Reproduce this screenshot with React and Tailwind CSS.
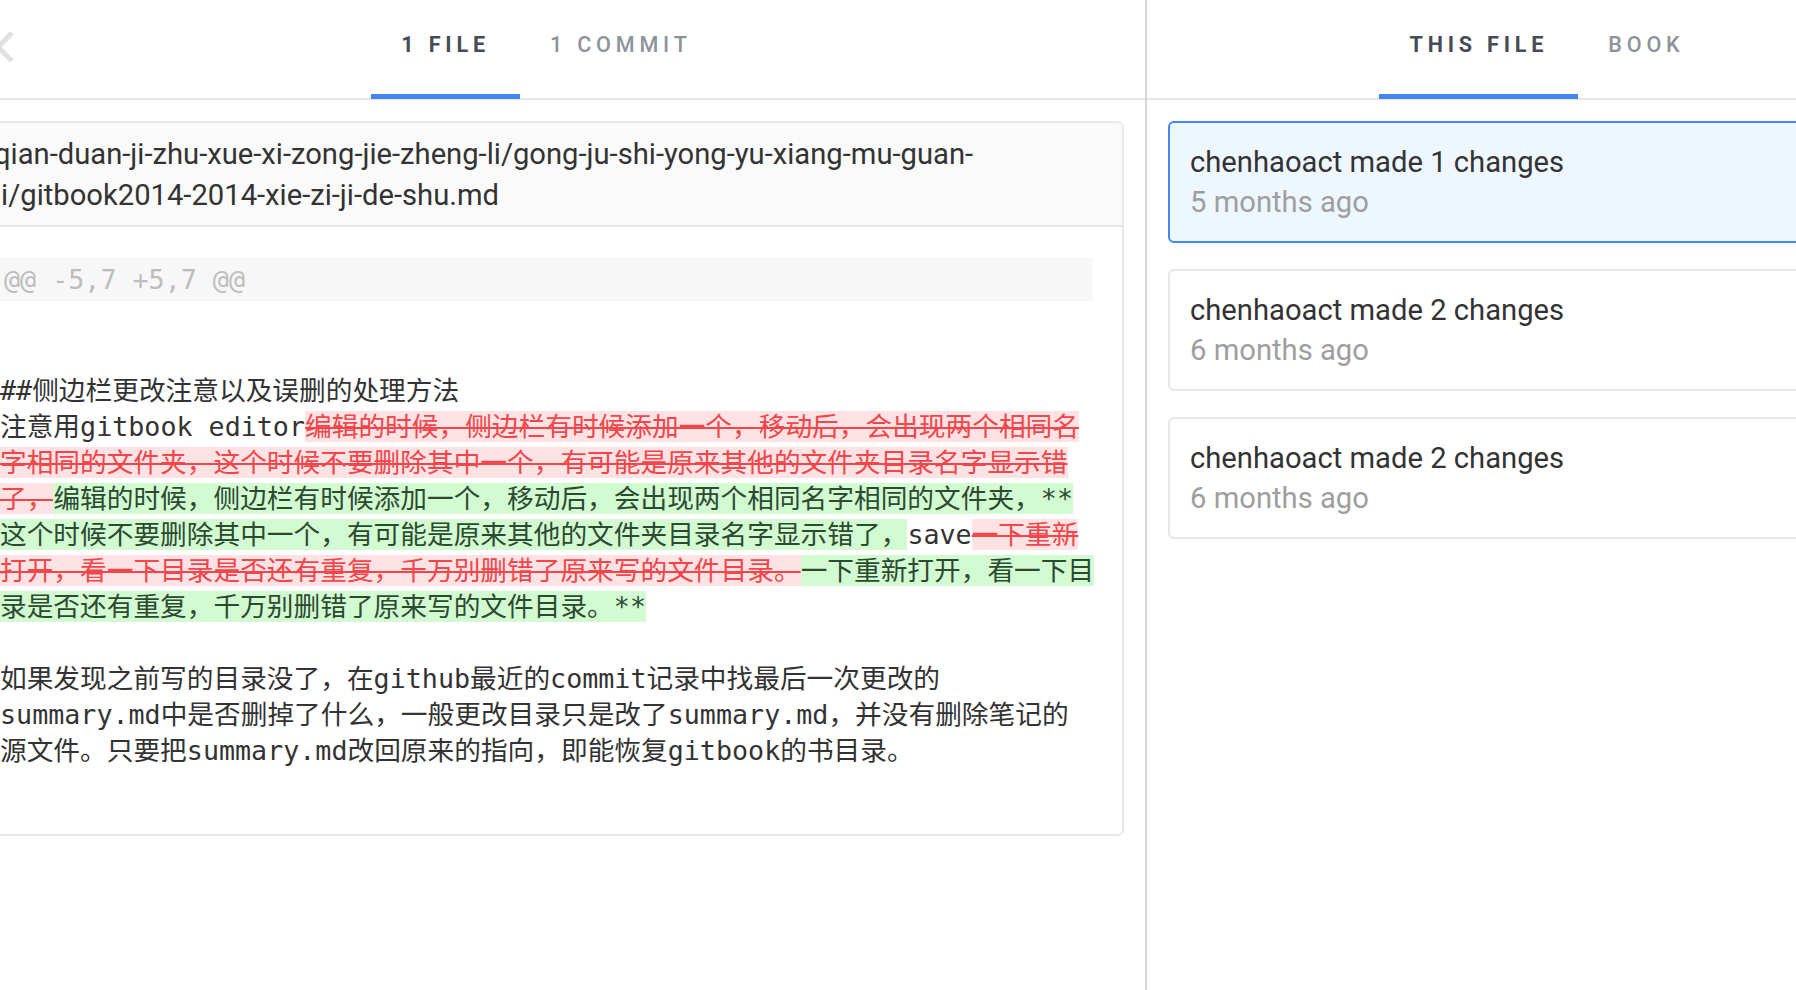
import React from "react";

const lines = [
  [],
  [],
  [["n", "##侧边栏更改注意以及误删的处理方法"]],
  [["n", "注意用gitbook editor"], ["d", "编辑的时候，侧边栏有时候添加一个，移动后，会出现两个相同名"]],
  [["d", "字相同的文件夹，这个时候不要删除其中一个，有可能是原来其他的文件夹目录名字显示错"]],
  [["d", "了，"], ["i", "编辑的时候，侧边栏有时候添加一个，移动后，会出现两个相同名字相同的文件夹，**"]],
  [["i", "这个时候不要删除其中一个，有可能是原来其他的文件夹目录名字显示错了，"], ["n", "save"], ["d", "一下重新"]],
  [["d", "打开，看一下目录是否还有重复，千万别删错了原来写的文件目录。"], ["i", "一下重新打开，看一下目"]],
  [["i", "录是否还有重复，千万别删错了原来写的文件目录。**"]],
  [],
  [["n", "如果发现之前写的目录没了，在github最近的commit记录中找最后一次更改的"]],
  [["n", "summary.md中是否删掉了什么，一般更改目录只是改了summary.md，并没有删除笔记的"]],
  [["n", "源文件。只要把summary.md改回原来的指向，即能恢复gitbook的书目录。"]],
  [],
];

function Seg({ t, s }) {
  if (t === "d")
    return (
      <span className="bg-[#ffe3e4] text-[#f2464b] line-through decoration-[#f2464b] decoration-[2px]">{s}</span>
    );
  if (t === "i") return <span className="bg-[#d2fbd2] text-[#2c4a30]">{s}</span>;
  return <span>{s}</span>;
}

function Tab({ label, active }) {
  return (
    <div
      className={
        "h-[99px] px-[30px] pb-[3px] flex items-center border-b-[5px] text-[21.6px] tracking-[4.8px] " +
        (active
          ? "border-[#4287f5] text-[#464c55] font-bold"
          : "border-transparent text-[#8e939b] font-medium")
      }
    >
      {label}
    </div>
  );
}

function Header({ tabs, chevron }) {
  return (
    <div className="relative h-[100px] shrink-0 border-b-2 border-[#e6e6e6] flex justify-center">
      {chevron && (
        <svg
          className="absolute left-[40px] top-[30px]"
          width="30"
          height="34"
          viewBox="0 0 30 34"
          fill="none"
        >
          <path d="M24 3 L10 17 L24 31" stroke="#e0e0e0" strokeWidth="5" />
        </svg>
      )}
      <div className="flex h-[99px]">
        {tabs.map((t, i) => (
          <Tab key={t} label={t} active={i === 0} />
        ))}
      </div>
    </div>
  );
}

function ChangeCard({ title, time, active }) {
  return (
    <div
      className={
        "h-[122px] rounded-[6px] border-2 px-[20px] py-[19px] leading-[40px] text-[29.2px] " +
        (active ? "border-[#4287f5] bg-[#eef7ff]" : "border-[#e8e8ec] bg-white")
      }
    >
      <div className="text-[#333333] whitespace-nowrap">{title}</div>
      <div className="text-[#9e9e9e] whitespace-nowrap">{time}</div>
    </div>
  );
}

export default function App() {
  return (
    <div
      className="w-[1796px] h-[990px] overflow-hidden bg-white"
      style={{ fontFamily: "Roboto, 'Noto Sans', sans-serif" }}
    >
      <div className="flex h-full w-[1999px] -ml-[52px]">
        {/* Left pane */}
        <div className="w-[1199px] shrink-0 border-r-2 border-[#d6d6dc] flex flex-col">
          <Header tabs={["1 FILE", "1 COMMIT"]} chevron />
          <div className="px-[21px] pt-[21px]">
            <div className="rounded-[6px] border-2 border-[#e8e8ec] overflow-hidden">
              <div className="bg-[#fafafa] border-b-2 border-[#e8e8ec] pl-[23px] pr-[20px] pt-[11px] pb-[9px] text-[29.2px] leading-[41px] text-[#333333] whitespace-nowrap">
                <div>qian-duan-ji-zhu-xue-xi-zong-jie-zheng-li/gong-ju-shi-yong-yu-xiang-mu-guan-</div>
                <div>li/gitbook2014-2014-xie-zi-ji-de-shu.md</div>
              </div>
              <div
                className="pt-[31px] px-[29px] pb-[29px] text-[26.7px] text-[#333333]"
                style={{ fontFamily: "'DejaVu Sans Mono', 'Noto Sans CJK SC', monospace" }}
              >
                <div className="h-[43px] leading-[43px] bg-[#f7f7f7] px-[4px] text-[#bdbdbd] whitespace-nowrap">
                  @@ -5,7 +5,7 @@
                </div>
                {lines.map((segs, i) => (
                  <div key={i} className="h-[36px] leading-[36px] whitespace-nowrap">
                    {segs.map(([t, s], j) => (
                      <Seg key={j} t={t} s={s} />
                    ))}
                  </div>
                ))}
              </div>
            </div>
          </div>
        </div>
        {/* Right pane */}
        <div className="w-[800px] shrink-0 flex flex-col">
          <Header tabs={["THIS FILE", "BOOK"]} />
          <div className="px-[21px] pt-[21px] flex flex-col gap-[26px]">
            <ChangeCard title="chenhaoact made 1 changes" time="5 months ago" active />
            <ChangeCard title="chenhaoact made 2 changes" time="6 months ago" />
            <ChangeCard title="chenhaoact made 2 changes" time="6 months ago" />
          </div>
        </div>
      </div>
    </div>
  );
}
